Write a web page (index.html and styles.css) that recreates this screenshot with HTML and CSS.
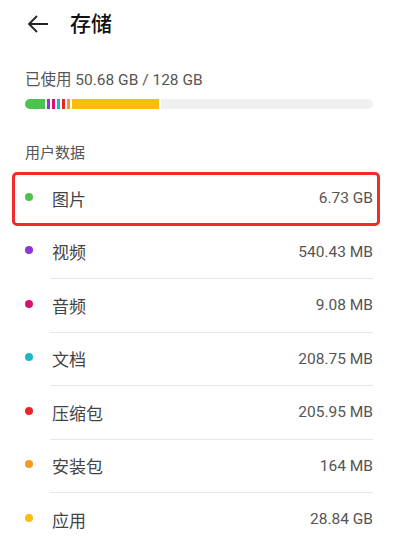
FILE: index.html
```html
<!DOCTYPE html>
<html lang="zh-CN">
<head>
  <meta charset="UTF-8">
  <meta name="viewport" content="width=device-width, initial-scale=1">
  <title>存储</title>
  <link rel="stylesheet" href="styles.css">
</head>
<body>

  <div class="header">
    <svg class="back" width="22" height="18" viewBox="0 0 22 18">
      <path d="M21 9H2M10 1L2 9l8 8" fill="none" stroke="#222" stroke-width="1.8"/>
    </svg>
    <h1 class="title">存储</h1>
  </div>

  <div class="usage">
    <div class="usage-text">已使用 50.68 GB / 128 GB</div>
    <div class="bar">
      <span class="seg green" style="width: 20px"></span>
      <span class="seg purple" style="width: 3px"></span>
      <span class="seg magenta" style="width: 3px"></span>
      <span class="seg cyan" style="width: 3px"></span>
      <span class="seg red" style="width: 3px"></span>
      <span class="seg orange" style="width: 3px"></span>
      <span class="seg yellow" style="width: 87px"></span>
      <span class="seg free"></span>
    </div>
  </div>

  <div class="section-label">用户数据</div>

  <ul class="list">
    <li class="row selected">
      <span class="dot green"></span>
      <div class="row-body"><span class="name">图片</span><span class="size">6.73 GB</span></div>
    </li>
    <li class="row">
      <span class="dot purple"></span>
      <div class="row-body"><span class="name">视频</span><span class="size">540.43 MB</span></div>
    </li>
    <li class="row">
      <span class="dot magenta"></span>
      <div class="row-body"><span class="name">音频</span><span class="size">9.08 MB</span></div>
    </li>
    <li class="row">
      <span class="dot cyan"></span>
      <div class="row-body"><span class="name">文档</span><span class="size">208.75 MB</span></div>
    </li>
    <li class="row">
      <span class="dot red"></span>
      <div class="row-body"><span class="name">压缩包</span><span class="size">205.95 MB</span></div>
    </li>
    <li class="row">
      <span class="dot orange"></span>
      <div class="row-body"><span class="name">安装包</span><span class="size">164 MB</span></div>
    </li>
    <li class="row">
      <span class="dot yellow"></span>
      <div class="row-body"><span class="name">应用</span><span class="size">28.84 GB</span></div>
    </li>
  </ul>

</body>
</html>
```

FILE: styles.css
```css
* {
  margin: 0;
  padding: 0;
  box-sizing: border-box;
}

body {
  background: #fff;
  font-family: Roboto, "Noto Sans CJK SC", sans-serif;
  color: #333;
  overflow: hidden;
}

.header {
  height: 48px;
  display: flex;
  align-items: center;
  padding-left: 27px;
  gap: 21px;
}

.back {
  display: block;
}

.title {
  font-size: 21px;
  font-weight: 500;
  color: #111;
  line-height: 28px;
}

.usage {
  padding: 22px 23px 0 25px;
}

.usage-text {
  font-size: 15.5px;
  line-height: 20px;
  color: #555;
}

.bar {
  margin-top: 9px;
  height: 10px;
  display: flex;
  gap: 2px;
  border-radius: 5px;
  overflow: hidden;
}

.seg {
  display: block;
  height: 100%;
}

.seg.free {
  flex: 1;
  background: #f0f0f0;
}

.green { background: #4cc24f; }
.purple { background: #8c37d8; }
.magenta { background: #d8136f; }
.cyan { background: #1db8c6; }
.red { background: #e8262b; }
.orange { background: #f49a23; }
.yellow { background: #fcbd0b; }

.section-label {
  margin-top: 34px;
  padding-left: 25px;
  font-size: 15px;
  line-height: 20px;
  color: #555;
}

.list {
  list-style: none;
  margin-top: 9px;
}

.row {
  position: relative;
  display: flex;
  align-items: center;
  padding: 0 23px 0 25px;
}

.dot {
  width: 8px;
  height: 8px;
  border-radius: 50%;
  margin-right: 17px;
  margin-top: -4px;
  flex-shrink: 0;
}

.row-body {
  flex: 1;
  height: 53.5px;
  display: flex;
  align-items: center;
  justify-content: space-between;
  padding-left: 2px;
  border-bottom: 1px solid #e6e6e6;
}

.name {
  font-size: 17px;
  color: #444;
}

.size {
  font-size: 15.5px;
  color: #555;
}

.selected::after {
  content: "";
  position: absolute;
  left: 12px;
  right: 16px;
  top: 0;
  height: 48px;
  border: 3px solid #ef2b2b;
  border-radius: 5px;
}
```
